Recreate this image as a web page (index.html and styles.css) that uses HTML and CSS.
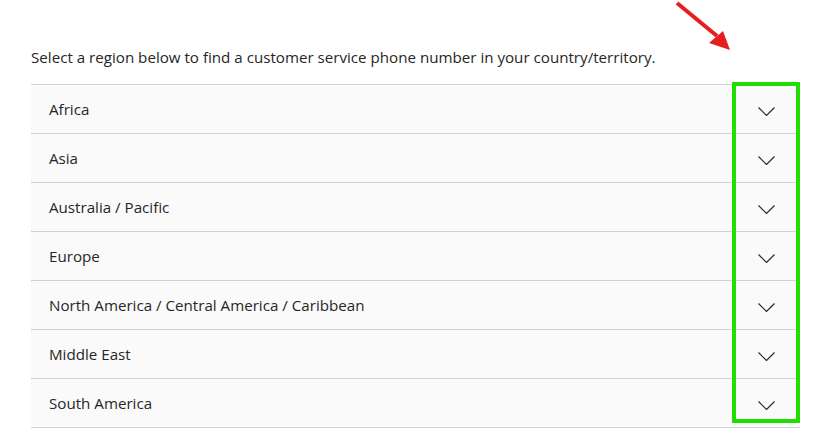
FILE: index.html
```html
<!DOCTYPE html>
<html lang="en">
<head>
<meta charset="utf-8">
<title>Contact regions</title>
<link rel="stylesheet" href="styles.css">
</head>
<body>
<main class="page">
  <p class="intro">Select a region below to find a customer service phone number in your country/territory.</p>
  <ul class="regions">
    <li class="region"><span class="region-name">Africa</span><svg class="chev" viewBox="0 0 17 9" width="17" height="9"><polyline points="0.5,0.5 8.5,8.5 16.5,0.5"/></svg></li>
    <li class="region"><span class="region-name">Asia</span><svg class="chev" viewBox="0 0 17 9" width="17" height="9"><polyline points="0.5,0.5 8.5,8.5 16.5,0.5"/></svg></li>
    <li class="region"><span class="region-name">Australia / Pacific</span><svg class="chev" viewBox="0 0 17 9" width="17" height="9"><polyline points="0.5,0.5 8.5,8.5 16.5,0.5"/></svg></li>
    <li class="region"><span class="region-name">Europe</span><svg class="chev" viewBox="0 0 17 9" width="17" height="9"><polyline points="0.5,0.5 8.5,8.5 16.5,0.5"/></svg></li>
    <li class="region"><span class="region-name">North America / Central America / Caribbean</span><svg class="chev" viewBox="0 0 17 9" width="17" height="9"><polyline points="0.5,0.5 8.5,8.5 16.5,0.5"/></svg></li>
    <li class="region"><span class="region-name">Middle East</span><svg class="chev" viewBox="0 0 17 9" width="17" height="9"><polyline points="0.5,0.5 8.5,8.5 16.5,0.5"/></svg></li>
    <li class="region"><span class="region-name">South America</span><svg class="chev" viewBox="0 0 17 9" width="17" height="9"><polyline points="0.5,0.5 8.5,8.5 16.5,0.5"/></svg></li>
  </ul>
  <div class="highlight"></div>
  <svg class="arrow" viewBox="0 0 70 56" width="70" height="56">
    <line x1="7" y1="3" x2="47" y2="36"/>
    <polygon points="60,50 39,43 53,31"/>
  </svg>
</main>
</body>
</html>
```

FILE: styles.css
```css
* { box-sizing: border-box; }
html, body { margin: 0; padding: 0; background: #ffffff; }
body {
  font-family: "Open Sans", "Noto Sans", "Liberation Sans", sans-serif;
  color: #262626;
}
.page {
  position: relative;
  width: 822px;
  height: 444px;
  padding: 46px 22px 0 31px;
}
.intro {
  margin: 0 0 16px 0;
  font-size: 15.15px;
  line-height: 22px;
  color: #262626;
}
.regions {
  list-style: none;
  margin: 0;
  padding: 0;
  border-top: 1px solid #d2d2d2;
}
.region {
  display: flex;
  align-items: center;
  justify-content: space-between;
  height: 49px;
  padding: 0 25px 0 18px;
  background: #fafafa;
  border-bottom: 1px solid #d2d2d2;
  font-size: 15.15px;
}
.chev {
  display: block;
  margin-top: 4px;
  fill: none;
  stroke: #2b2b2b;
  stroke-width: 1.2;
}
.highlight {
  position: absolute;
  left: 732px;
  top: 82px;
  width: 68px;
  height: 341px;
  border: 4px solid #22dd00;
}
.arrow {
  position: absolute;
  left: 670px;
  top: 0;
}
.arrow line {
  stroke: #e61e1e;
  stroke-width: 4;
}
.arrow polygon {
  fill: #e61e1e;
}
```
